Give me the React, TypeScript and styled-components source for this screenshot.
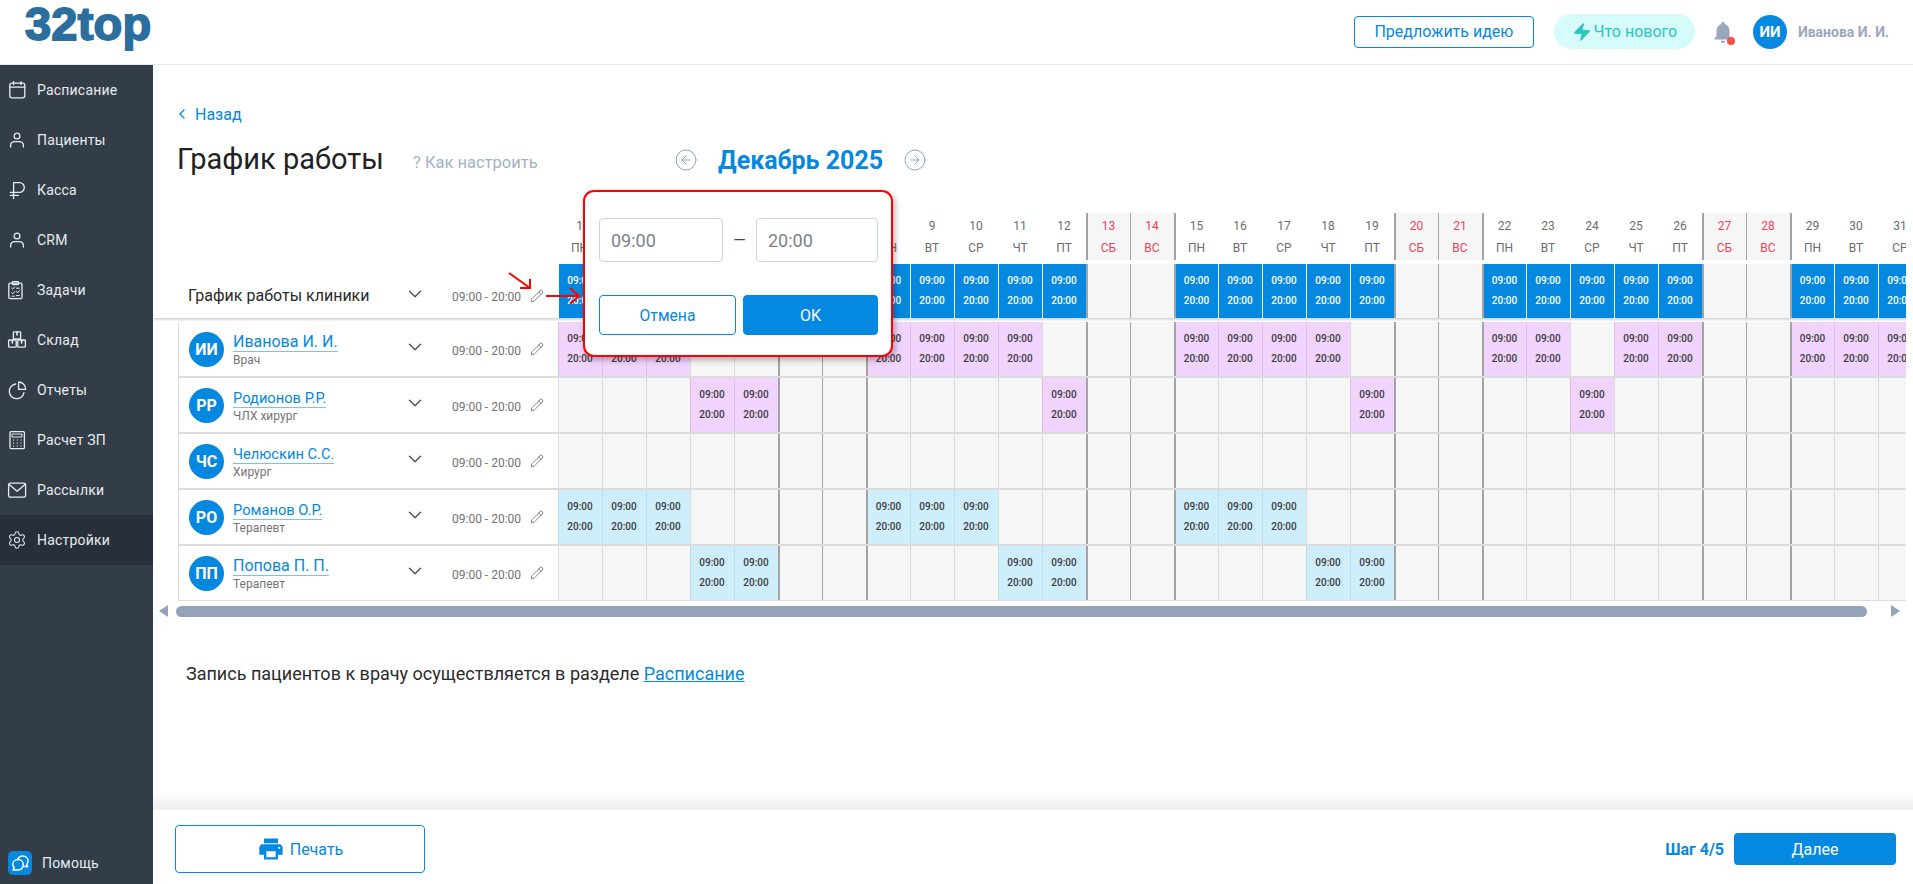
import React from "react";
import styled, { createGlobalStyle } from "styled-components";
import {
  ChevronDown,
  ChevronLeft,
  CircleArrowLeft,
  CircleArrowRight,
  Pencil,
  Settings,
  Zap,
} from "lucide-react";
import { MdLocalPrintshop, MdNotifications } from "react-icons/md";

const blue = "#0588e0";
const cellWidth = 44;

const GlobalStyle = createGlobalStyle`
  html, body {
    margin: 0;
    padding: 0;
    background: #fff;
    font-family: Roboto, "Liberation Sans", sans-serif;
    color: #222;
  }
  * { box-sizing: border-box; }
`;

const Page = styled.div`
  position: relative;
  width: 100%;
  height: 100vh;
  display: flex;
  flex-direction: column;
  overflow: hidden;
`;

const Header = styled.header`
  flex: 0 0 65px;
  display: flex;
  align-items: center;
  padding: 0 24px 1px 25px;
  border-bottom: 1px solid #e2e8f2;
`;

const Logo = styled.div`
  font-family: "Liberation Sans", Arial, sans-serif;
  font-size: 47px;
  font-weight: 700;
  line-height: 44px;
  margin-top: -16px;
  color: #2b6f9e;
  -webkit-text-stroke: 1.8px #2b6f9e;
  letter-spacing: 0.2px;
`;

const HeaderRight = styled.div`
  margin-left: auto;
  display: flex;
  align-items: center;
`;

const IdeaButton = styled.button`
  width: 180px;
  height: 32px;
  border: 1px solid ${blue};
  border-radius: 4px;
  background: #fff;
  color: ${blue};
  font: 400 16px Roboto, sans-serif;
`;

const NewsButton = styled.button`
  width: 141px;
  height: 35px;
  margin-left: 20px;
  display: flex;
  align-items: center;
  justify-content: center;
  gap: 2px;
  border: 0;
  border-radius: 18px;
  background: #d5fbfa;
  color: #2dc5c0;
  font: 400 16px Roboto, sans-serif;
`;

const BellBox = styled.div`
  position: relative;
  width: 26px;
  height: 26px;
  margin-left: 15px;
  color: #99a6bc;
`;

const BellDot = styled.span`
  position: absolute;
  right: 1px;
  bottom: 0;
  width: 8px;
  height: 8px;
  border-radius: 50%;
  background: #f0524a;
`;

const Avatar = styled.div<{ $size: number; $font: number }>`
  flex: 0 0 ${(p) => p.$size}px;
  width: ${(p) => p.$size}px;
  height: ${(p) => p.$size}px;
  border-radius: 50%;
  background: ${blue};
  color: #fff;
  display: flex;
  align-items: center;
  justify-content: center;
  font-size: ${(p) => p.$font}px;
  font-weight: 700;
`;

const UserBox = styled.div`
  margin-left: 17px;
  display: flex;
  align-items: center;
  gap: 11px;
`;

const UserName = styled.span`
  font-size: 14px;
  font-weight: 700;
  color: #9ba7bd;
`;

const Body = styled.div`
  flex: 1;
  min-height: 0;
  display: flex;
`;

const Sidebar = styled.nav`
  flex: 0 0 153px;
  display: flex;
  flex-direction: column;
  background: #333d48;
`;

const NavItem = styled.div<{ $active?: boolean }>`
  height: 50px;
  display: flex;
  align-items: center;
  gap: 10px;
  padding-left: 7px;
  background: ${(p) => (p.$active ? "#27303a" : "transparent")};
  color: #e8ebef;
  font-size: 14px;
  font-weight: 400;
  letter-spacing: 0.2px;
  svg {
    flex: 0 0 20px;
  }
`;

const HelpItem = styled.div`
  margin-top: auto;
  margin-bottom: 9px;
  padding-left: 8px;
  display: flex;
  align-items: center;
  gap: 10px;
  color: #e8ebef;
  font-size: 14px;
  letter-spacing: 0.2px;
`;

const HelpIcon = styled.span`
  width: 24px;
  height: 24px;
  border-radius: 5px;
  background: ${blue};
  display: flex;
  align-items: center;
  justify-content: center;
`;

const Main = styled.main`
  flex: 1;
  min-width: 0;
  display: flex;
  flex-direction: column;
`;

const Content = styled.div`
  flex: 1;
  min-height: 0;
  padding-top: 39px;
`;

const BackLink = styled.a`
  display: flex;
  align-items: center;
  gap: 5px;
  height: 20px;
  padding-left: 21px;
  color: ${blue};
  font-size: 16px;
`;

const TitleRow = styled.div`
  margin-top: 16px;
  height: 40px;
  padding-left: 24px;
  display: grid;
  grid-template-columns: 236px 261px auto;
  align-items: center;
`;

const Title = styled.h1`
  margin: -2px 0 0;
  font-size: 29px;
  font-weight: 400;
  color: #222;
`;

const Hint = styled.span`
  font-size: 16.5px;
  padding-top: 4px;
  color: #a3b2c8;
`;

const Pager = styled.div`
  display: flex;
  align-items: center;
  color: #93a3b9;
`;

const Month = styled.span`
  margin: 0 20px;
  font-size: 25px;
  font-weight: 700;
  color: ${blue};
  white-space: nowrap;
`;

const TableClip = styled.div`
  margin-top: 33px;
  width: 1753px;
  padding-left: 25px;
  overflow: hidden;
`;

const Row = styled.div`
  display: flex;
  width: max-content;
`;

const HeadRow = styled(Row)`
  height: 47px;
  margin-bottom: 4px;
`;

const ClinicRow = styled(Row)`
  height: 54px;
  margin-left: -25px;
  padding-left: 25px;
  box-shadow: 0 3px 2px -1px rgba(0, 0, 0, 0.16);
  margin-bottom: 4px;
`;

const StaffRow = styled(Row)<{ $last?: boolean }>`
  height: ${(p) => (p.$last ? 55 : 56)}px;
  border-bottom: ${(p) => (p.$last ? 1 : 2)}px solid #dcdcdc;
`;

const HeadSpacer = styled.div`
  flex: 0 0 380px;
`;

const NameCell = styled.div<{ $bordered?: boolean }>`
  flex: 0 0 380px;
  display: flex;
  align-items: center;
  padding-left: 10px;
  padding-top: ${(p) => (p.$bordered ? 0 : 9)}px;
  border-left: ${(p) => (p.$bordered ? "1px solid #dcdcdc" : "0")};
`;

const NameBlock = styled.div`
  flex: 0 0 167px;
  margin: 2px 0 0 9px;
  display: flex;
  flex-direction: column;
  align-items: flex-start;
`;

const NameLink = styled.a<{ $font: number }>`
  font-size: ${(p) => p.$font}px;
  line-height: 18px;
  color: ${blue};
  border-bottom: 1px solid #7cc0ee;
`;

const Role = styled.span`
  margin-top: 1px;
  font-size: 12px;
  line-height: 14px;
  color: #757575;
`;

const ClinicName = styled.span`
  flex: 0 0 212px;
  font-size: 16px;
  color: #2a2a2a;
`;

const ChevronBox = styled.span`
  flex: 0 0 30px;
  display: flex;
  justify-content: center;
  margin-top: -4px;
  color: #4b5560;
`;

const TimeText = styled.span`
  margin-left: 22px;
  margin-top: 3px;
  width: 69px;
  font-size: 12px;
  white-space: nowrap;
  color: #727272;
`;

const PencilBox = styled.span`
  margin-left: 9px;
  display: flex;
  color: #666;
`;

type CellKind = "empty" | "clinic" | "purple" | "cyan";

const cellColours: Record<CellKind, { bg: string; line: string; text: string }> = {
  empty: { bg: "#f6f6f6", line: "#dcdcdc", text: "#333" },
  clinic: { bg: blue, line: "#fff", text: "#fff" },
  purple: { bg: "#f0d4fd", line: "#dcc0e8", text: "#3a3a3a" },
  cyan: { bg: "#cfeefb", line: "#bcdcea", text: "#3a3a3a" },
};

// left edge of a column: weekends get the darker rule
const leftEdge = (day: number, line: string) => {
  const weekday = (day - 1) % 7;
  if (day === 1) return `1px solid ${line}`;
  if (weekday === 5 || weekday === 0) return "2px solid #a3a3a3";
  if (weekday === 6) return "1px solid #a3a3a3";
  return `1px solid ${line}`;
};

const DayCell = styled.div<{ $kind: CellKind; $day: number }>`
  flex: 0 0 ${cellWidth}px;
  display: flex;
  flex-direction: column;
  align-items: center;
  justify-content: center;
  padding-right: 1px;
  background: ${(p) => cellColours[p.$kind].bg};
  border-left: ${(p) => leftEdge(p.$day, cellColours[p.$kind].line)};
  color: ${(p) => cellColours[p.$kind].text};
  font-size: 10px;
  font-weight: 500;
  line-height: 20px;
`;

const HeadCell = styled.div<{ $day: number; $off: boolean }>`
  flex: 0 0 ${cellWidth}px;
  display: flex;
  flex-direction: column;
  align-items: center;
  justify-content: center;
  padding-right: 1px;
  background: ${(p) => (p.$off ? "#f6f6f6" : "#fff")};
  border-left: ${(p) => (p.$day === 1 ? "0" : leftEdge(p.$day, p.$off ? "#a3a3a3" : "transparent"))};
  color: ${(p) => (p.$off ? "#f0425a" : "#6c6c6c")};
  font-size: 12px;
  line-height: 22px;
`;

const ScrollRow = styled.div`
  margin-top: 4px;
  height: 12px;
  display: flex;
  align-items: center;
  padding-left: 6px;
  width: 1747px;
`;

const Triangle = styled.span<{ $right?: boolean }>`
  width: 0;
  height: 0;
  border-top: 6px solid transparent;
  border-bottom: 6px solid transparent;
  ${(p) => (p.$right ? "border-left: 9px solid #93a3b9;" : "border-right: 9px solid #93a3b9;")}
`;

const ScrollThumb = styled.div`
  width: 1691px;
  height: 11px;
  margin: 0 24px 0 8px;
  border-radius: 6px;
  background: #93a3b9;
`;

const Note = styled.p`
  margin: 45px 0 0;
  padding-left: 33px;
  font-size: 18px;
  line-height: 24px;
  color: #2c2c2c;
  a {
    color: ${blue};
    text-decoration: underline;
  }
`;

const Shade = styled.div`
  flex: 0 0 18px;
  background: linear-gradient(#fff, #eeeeee);
`;

const Footer = styled.footer`
  flex: 0 0 74px;
  display: flex;
  align-items: center;
  padding: 4px 17px 0 22px;
`;

const PrintButton = styled.button`
  width: 250px;
  height: 48px;
  display: flex;
  align-items: center;
  justify-content: center;
  gap: 5px;
  border: 1px solid ${blue};
  border-radius: 4px;
  background: #fff;
  color: ${blue};
  font: 400 16px Roboto, sans-serif;
`;

const Step = styled.span`
  margin-left: auto;
  margin-right: 10px;
  font-size: 16px;
  font-weight: 700;
  color: ${blue};
`;

const NextButton = styled.button`
  width: 162px;
  height: 32px;
  border: 0;
  border-radius: 4px;
  background: ${blue};
  color: #fff;
  font: 400 16px Roboto, sans-serif;
`;

const Popup = styled.div`
  position: absolute;
  left: 583px;
  top: 190px;
  width: 310px;
  height: 167px;
  padding: 26px 13px 0 14px;
  background: #fff;
  border: 2px solid #f00;
  border-radius: 11px;
  box-shadow: 2px 3px 6px rgba(0, 0, 0, 0.3);
`;

const PopupInputs = styled.div`
  display: flex;
  align-items: center;
`;

const TimeInput = styled.div<{ $width: number }>`
  flex: 0 0 ${(p) => p.$width}px;
  height: 44px;
  padding-left: 11px;
  display: flex;
  align-items: center;
  border: 1px solid #c9d3e3;
  border-radius: 4px;
  color: #7b8290;
  font-size: 18px;
`;

const Dash = styled.span`
  flex: 1;
  text-align: center;
  font-size: 16px;
  color: #444;
`;

const PopupButtons = styled.div`
  margin-top: 33px;
  display: flex;
  gap: 7px;
`;

const PopupButton = styled.button<{ $primary?: boolean }>`
  height: 40px;
  flex: ${(p) => (p.$primary ? "0 0 135px" : "0 0 137px")};
  border: 1px solid ${blue};
  border-radius: 4px;
  background: ${(p) => (p.$primary ? blue : "#fff")};
  color: ${(p) => (p.$primary ? "#fff" : blue)};
  font: 400 ${(p) => (p.$primary ? 16 : 15.7)}px Roboto, sans-serif;
`;

const ArrowsLayer = styled.svg`
  position: absolute;
  left: 0;
  top: 0;
  pointer-events: none;
`;

const NavSvg = styled.svg.attrs({
  viewBox: "0 0 20 20",
  width: 20,
  height: 20,
  fill: "none",
  stroke: "currentColor",
  strokeWidth: 1.3,
  strokeLinecap: "round",
  strokeLinejoin: "round",
})``;

const CalendarIcon = () => (
  <NavSvg>
    <rect x="2.8" y="3.2" width="15" height="14.6" rx="2" />
    <path d="M2.8 7.2H17.8M6.6 1.6V4.4M14 1.6V4.4" />
  </NavSvg>
);

const PersonIcon = () => (
  <NavSvg>
    <circle cx="10" cy="6" r="2.9" />
    <path d="M3.6 17V15.6C3.6 13 5.6 11.6 8 11.6H12C14.4 11.6 16.4 13 16.4 15.6V17" />
  </NavSvg>
);

const RubleIcon = () => (
  <NavSvg>
    <path d="M6.6 18.6V2.6H12.4A4.9 4.9 0 0 1 12.4 12.4H3.4M3.4 15.4H11.4" />
  </NavSvg>
);

const TasksIcon = () => (
  <NavSvg>
    <rect x="1.8" y="3.2" width="13.2" height="15.4" rx="1.4" />
    <rect x="5.4" y="1.6" width="6" height="3" rx="0.6" />
    <path d="M4.6 8L5.8 9.2L7.6 7M9.4 8.2H12.4M4.6 12.6L5.8 13.8L7.6 11.6M9.4 11.4L10.6 12.8L12.4 10.6M5 16.2H7.4M9.4 15.6H12.4" strokeWidth={1} />
  </NavSvg>
);

const StockIcon = () => (
  <NavSvg>
    <rect x="6.4" y="1.8" width="7.2" height="7.2" rx="0.8" />
    <rect x="1.6" y="10" width="7.6" height="7.2" rx="0.8" />
    <rect x="10.8" y="10" width="7.6" height="7.2" rx="0.8" />
    <path d="M10 2V5M5.4 10V13M14.6 10V13" strokeWidth={1.6} />
  </NavSvg>
);

const ReportsIcon = () => (
  <NavSvg>
    <path d="M8.6 4A7.4 7.4 0 1 0 17 12.6" />
    <path d="M11.6 2A7 7 0 0 1 18.6 9.4H11.6Z" />
  </NavSvg>
);

const SalaryIcon = () => (
  <NavSvg>
    <rect x="3" y="1.6" width="14.4" height="17" rx="1.2" />
    <rect x="5.4" y="4" width="9.6" height="3" strokeWidth={1} />
    <path d="M6 10H6.8M9.8 10H10.6M13.6 10H14.4M6 13H6.8M9.8 13H10.6M13.6 13H14.4M6 16H6.8M9.8 16H10.6M13.6 16H14.4" strokeWidth={1.6} strokeLinecap="butt" />
  </NavSvg>
);

const MailIcon = () => (
  <NavSvg>
    <rect x="1.6" y="3.2" width="17" height="14" rx="1.6" />
    <path d="M2.2 4.4L10.1 11.2L18 4.4" />
  </NavSvg>
);

const GearIcon = () => <Settings size={20} strokeWidth={1.3} />;

const navItems = [
  { label: "Расписание", icon: CalendarIcon },
  { label: "Пациенты", icon: PersonIcon },
  { label: "Касса", icon: RubleIcon },
  { label: "CRM", icon: PersonIcon },
  { label: "Задачи", icon: TasksIcon },
  { label: "Склад", icon: StockIcon },
  { label: "Отчеты", icon: ReportsIcon },
  { label: "Расчет ЗП", icon: SalaryIcon },
  { label: "Рассылки", icon: MailIcon },
  { label: "Настройки", icon: GearIcon, active: true },
];

const weekNames = ["ПН", "ВТ", "СР", "ЧТ", "ПТ", "СБ", "ВС"];
const days = Array.from({ length: 31 }, (_, i) => i + 1);
const isOff = (day: number) => (day - 1) % 7 >= 5;

const staff = [
  { initials: "ИИ", name: "Иванова И. И.", role: "Врач", font: 16, kind: "purple" as CellKind, on: [1, 2, 3, 8, 9, 10, 11, 15, 16, 17, 18, 22, 23, 25, 26, 29, 30, 31] },
  { initials: "РР", name: "Родионов Р.Р.", role: "ЧЛХ хирург", font: 14.7, kind: "purple" as CellKind, on: [4, 5, 12, 19, 24] },
  { initials: "ЧС", name: "Челюскин С.С.", role: "Хирург", font: 14.7, kind: "empty" as CellKind, on: [] as number[] },
  { initials: "РО", name: "Романов О.Р.", role: "Терапевт", font: 14.7, kind: "cyan" as CellKind, on: [1, 2, 3, 8, 9, 10, 15, 16, 17] },
  { initials: "ПП", name: "Попова П. П.", role: "Терапевт", font: 16, kind: "cyan" as CellKind, on: [4, 5, 11, 12, 18, 19] },
];

function Hours() {
  return (
    <>
      <span>09:00</span>
      <span>20:00</span>
    </>
  );
}

function TimeAndEdit() {
  return (
    <>
      <ChevronBox>
        <ChevronDown size={22} strokeWidth={1.6} />
      </ChevronBox>
      <TimeText>09:00 - 20:00</TimeText>
      <PencilBox>
        <Pencil size={14} strokeWidth={1.4} />
      </PencilBox>
    </>
  );
}

function App() {
  return (
    <Page>
      <GlobalStyle />
      <Header>
        <Logo>32top</Logo>
        <HeaderRight>
          <IdeaButton>Предложить идею</IdeaButton>
          <NewsButton>
            <Zap size={20} fill="#2dc5c0" strokeWidth={1} />
            Что нового
          </NewsButton>
          <BellBox>
            <MdNotifications size={26} />
            <BellDot />
          </BellBox>
          <UserBox>
            <Avatar $size={34} $font={15}>ИИ</Avatar>
            <UserName>Иванова И. И.</UserName>
          </UserBox>
        </HeaderRight>
      </Header>
      <Body>
        <Sidebar>
          {navItems.map(({ label, icon: Icon, active }) => (
            <NavItem key={label} $active={active}>
              <Icon />
              {label}
            </NavItem>
          ))}
          <HelpItem>
            <HelpIcon>
              <svg viewBox="0 0 24 24" width={24} height={24} fill="none" stroke="#fff" strokeWidth={1.5} strokeLinejoin="round" strokeLinecap="round">
                <path d="M10 8.5C13 8.5 15.3 10.8 15.3 13.7S13 19 10 19H5L6.3 16.6C5.3 15.6 4.7 14.7 4.7 13.7 4.7 10.8 7 8.5 10 8.5Z" />
                <path d="M9.5 8.5C10.4 6.3 12.4 5 14.8 5 17.8 5 20 7.3 20 10.2 20 11.6 19.4 12.8 18.7 13.6L19.7 15.8 15.4 15.2" />
              </svg>
            </HelpIcon>
            Помощь
          </HelpItem>
        </Sidebar>
        <Main>
          <Content>
            <BackLink>
              <ChevronLeft size={16} strokeWidth={2} />
              Назад
            </BackLink>
            <TitleRow>
              <Title>График работы</Title>
              <Hint>? Как настроить</Hint>
              <Pager>
                <CircleArrowLeft size={24} strokeWidth={1} />
                <Month>Декабрь 2025</Month>
                <CircleArrowRight size={24} strokeWidth={1} />
              </Pager>
            </TitleRow>
            <TableClip>
              <HeadRow>
                <HeadSpacer />
                {days.map((day) => (
                  <HeadCell key={day} $day={day} $off={isOff(day)}>
                    <span>{day}</span>
                    <span>{weekNames[(day - 1) % 7]}</span>
                  </HeadCell>
                ))}
              </HeadRow>
              <ClinicRow>
                <NameCell>
                  <ClinicName>График работы клиники</ClinicName>
                  <TimeAndEdit />
                </NameCell>
                {days.map((day) => (
                  <DayCell key={day} $day={day} $kind={isOff(day) ? "empty" : "clinic"}>
                    {!isOff(day) && <Hours />}
                  </DayCell>
                ))}
              </ClinicRow>
              {staff.map((person, index) => (
                <StaffRow key={person.name} $last={index === staff.length - 1}>
                  <NameCell $bordered>
                    <Avatar $size={35} $font={16}>{person.initials}</Avatar>
                    <NameBlock>
                      <NameLink $font={person.font}>{person.name}</NameLink>
                      <Role>{person.role}</Role>
                    </NameBlock>
                    <TimeAndEdit />
                  </NameCell>
                  {days.map((day) => {
                    const on = person.on.includes(day);
                    return (
                      <DayCell key={day} $day={day} $kind={on ? person.kind : "empty"}>
                        {on && <Hours />}
                      </DayCell>
                    );
                  })}
                </StaffRow>
              ))}
            </TableClip>
            <ScrollRow>
              <Triangle />
              <ScrollThumb />
              <Triangle $right />
            </ScrollRow>
            <Note>
              Запись пациентов к врачу осуществляется в разделе <a>Расписание</a>
            </Note>
          </Content>
          <Shade />
          <Footer>
            <PrintButton>
              <MdLocalPrintshop size={28} />
              Печать
            </PrintButton>
            <Step>Шаг 4/5</Step>
            <NextButton>Далее</NextButton>
          </Footer>
        </Main>
      </Body>
      <Popup>
        <PopupInputs>
          <TimeInput $width={124}>09:00</TimeInput>
          <Dash>—</Dash>
          <TimeInput $width={122}>20:00</TimeInput>
        </PopupInputs>
        <PopupButtons>
          <PopupButton>Отмена</PopupButton>
          <PopupButton $primary>OK</PopupButton>
        </PopupButtons>
      </Popup>
      <ArrowsLayer width={600} height={320}>
        <path d="M509 273 L530 288 M520 288 H530 V279" fill="none" stroke="#f00" strokeWidth={2} />
        <path d="M546 296 H579 M570 288 L579 296 L570 304" fill="none" stroke="#f00" strokeWidth={2} />
      </ArrowsLayer>
    </Page>
  );
}

export default App;
